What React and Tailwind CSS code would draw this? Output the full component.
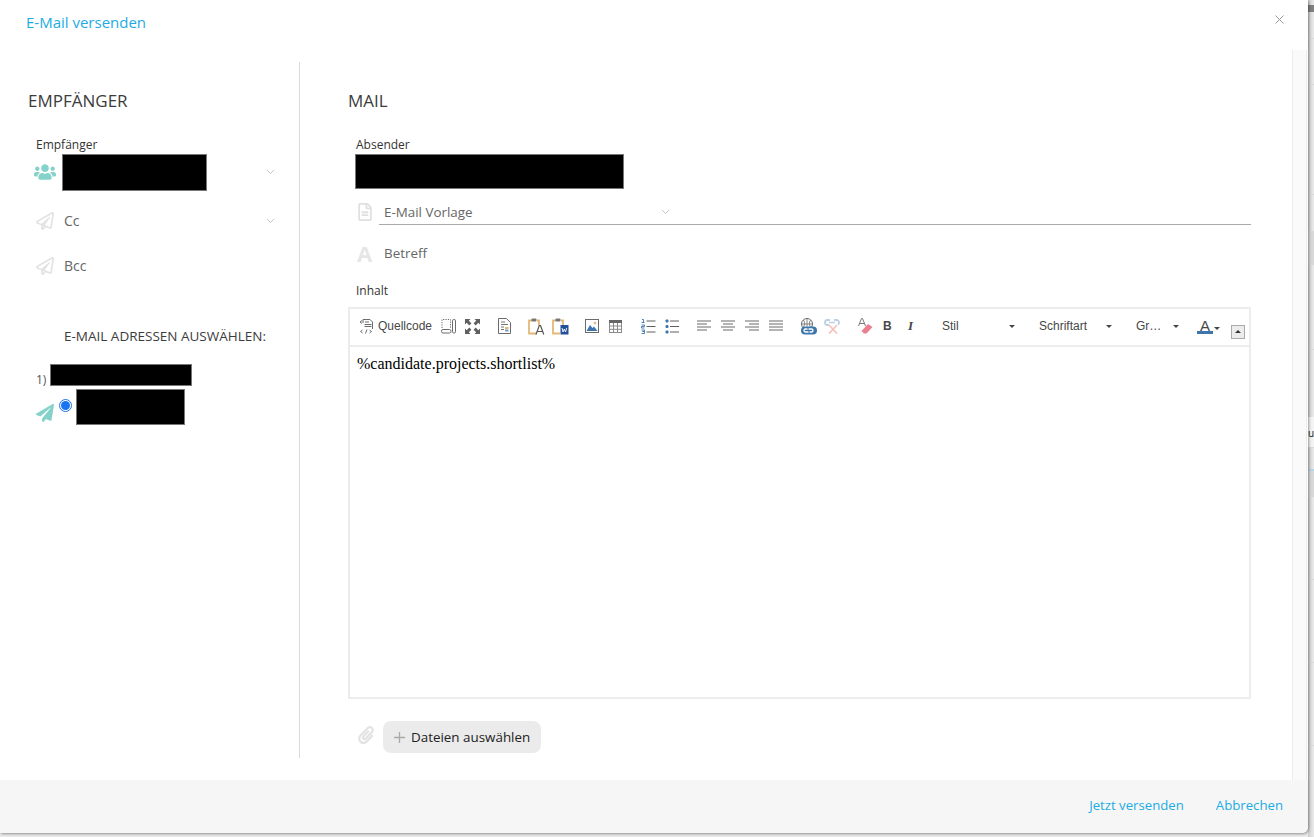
import React from "react";
import { FaRegPaperPlane, FaPaperPlane, FaUsers, FaRegFileAlt, FaPaperclip } from "react-icons/fa";

const Chevron = ({ className = "" }) => (
  <svg width="9" height="6" viewBox="0 0 9 6" className={className} fill="none" stroke="#c4c4c4" strokeWidth="1"><path d="M1 1l3.5 3.5L8 1" /></svg>
);

const Source = () => (
  <svg width="16" height="16" viewBox="0 0 16 16" fill="none" stroke="#6b6b6b" strokeWidth="1">
    <path d="M4 5V1.500h7L13.500 4v7M3 2.500L1 4l2 1.500M6 4h4M5.500 6.500h7M5.500 8.500h7M3.500 12l-2 1.500 2 1.500M8 11.500l-1.500 4M10.500 12l2 1.500-2 1.500" />
  </svg>
);
const Preview = () => (
  <svg width="15" height="16" viewBox="0 0 15 16" fill="none" stroke="#6b6b6b" strokeWidth="1">
    <path d="M1 10V1.500h8.500V10" strokeDasharray="1.200 1.200" /><rect x=".5" y="11.500" width="9.500" height="3.500" rx="1.500" /><rect x="11.500" y="1.500" width="3" height="13.500" rx="1.300" />
  </svg>
);
const Maximize = () => (
  <svg width="15" height="15" viewBox="0 0 15 15" fill="#5f5f5f">
    <path d="M0 0h5.500L3.800 1.700l2.600 2.600-2.100 2.100-2.600-2.600L0 5.500zM15 0v5.500l-1.700-1.700-2.600 2.600-2.100-2.100 2.600-2.600L9.500 0zM0 15V9.500l1.700 1.700 2.600-2.600 2.100 2.100-2.600 2.600L5.500 15zM15 15H9.500l1.700-1.700-2.600-2.600 2.100-2.100 2.600 2.600L15 9.500z" />
  </svg>
);
const DocTpl = () => (
  <svg width="13" height="16" viewBox="0 0 13 16" fill="none">
    <path d="M.5.5h8l4 4v11H.5z" stroke="#6b6b6b" fill="#fff" />
    <path d="M3 4h4M3 6.500h7M3 9h3M3 11.500h3" stroke="#777" />
    <rect x="7" y="9" width="3.500" height="2" fill="#e3b877" /><rect x="7" y="11.500" width="3.500" height="2" fill="#6f9fcb" />
  </svg>
);
const Paste = ({ word }) => (
  <svg width="17" height="17" viewBox="0 0 17 17" fill="none">
    <path d="M4 2.500H1v13h7" stroke="#e3b877" strokeWidth="1.800" />
    <path d="M9 2.500h2v5" stroke="#e3b877" strokeWidth="1.800" />
    <rect x="3.500" y=".5" width="5" height="3" rx="1" fill="#777" />
    {word ? (
      <g><rect x="8.500" y="7" width="8" height="9.500" fill="#24509a" /><path d="M10 10l1 4 1.300-3 1.300 3 1-4" stroke="#fff" strokeWidth=".9" /></g>
    ) : (
      <path d="M8 16.500l3.300-9h1.200l3.300 9M9.300 13.500h5.200" stroke="#555" strokeWidth="1.200" />
    )}
  </svg>
);
const ImageIcon = () => (
  <svg width="14" height="14" viewBox="0 0 14 14" fill="none">
    <rect x=".5" y=".5" width="13" height="13" stroke="#6b6b6b" fill="#fff" />
    <circle cx="10" cy="4" r="1.300" fill="#e3b877" />
    <path d="M1.500 12L5 6l2.500 3 1.500-1.500 3.500 4.500z" fill="#3d76ad" />
  </svg>
);
const Table = () => (
  <svg width="13" height="13" viewBox="0 0 13 13" fill="none" stroke="#8a8a8a" strokeWidth="1">
    <rect x=".5" y=".5" width="12" height="12" /><rect x="0" y="0" width="13" height="3" fill="#666" stroke="none" />
    <path d="M0 6h13M0 9.300h13M4.500 3v10M8.500 3v10" />
  </svg>
);
const NumList = () => (
  <svg width="15" height="15" viewBox="0 0 15 15">
    <path d="M5.500 2h9M5.500 7.500h9M5.500 13h9" stroke="#5f5f5f" />
    <path d="M1 .5h1.500v3M.5 3.500h3M.5 6h3v1.500h-3V9h3M.5 11h3v1.500h-2 2V14.500h-3" stroke="#3d76ad" fill="none" strokeWidth=".9" />
  </svg>
);
const BulList = () => (
  <svg width="14" height="15" viewBox="0 0 14 15">
    <path d="M5 2h9M5 7.500h9M5 13h9" stroke="#5f5f5f" />
    <rect x="0.500" y="0.500" width="3" height="3" rx="1" fill="#3d76ad" /><rect x="0.500" y="6" width="3" height="3" rx="1" fill="#3d76ad" /><rect x="0.500" y="11.500" width="3" height="3" rx="1" fill="#3d76ad" />
  </svg>
);
const Align = ({ d }) => (
  <svg width="14" height="12" viewBox="0 0 14 12" stroke="#6b6b6b" strokeWidth="1" fill="none"><path d={d} /></svg>
);
const LinkIcon = () => (
  <svg width="17" height="17" viewBox="0 0 17 17" fill="none">
    <circle cx="7" cy="6" r="5.500" stroke="#6b6b6b" />
    <path d="M1.500 6h11M7 .5v8M3.500 2C5 4.500 5 6.500 3.500 9M10.500 2C9 4.500 9 6.500 10.500 9" stroke="#6b6b6b" strokeWidth=".8" />
    <rect x="1" y="8.500" width="16" height="8" rx="4" fill="#3d76ad" />
    <path d="M7.500 11H5.500a1.500 1.500 0 000 3h3M9.500 14h2a1.500 1.500 0 000-3h-3" stroke="#fff" strokeWidth="1.300" />
  </svg>
);
const Unlink = () => (
  <svg width="16" height="16" viewBox="0 0 16 16" fill="none">
    <path d="M6 2H3.500a2.500 2.500 0 000 5H5M10 2h2.500a2.500 2.500 0 011.500 4.500" stroke="#bcd0e4" strokeWidth="1.800" />
    <path d="M5 4.500h6" stroke="#bcd0e4" strokeWidth="1.500" />
    <path d="M5 7l8 8.500M13 7l-8 8.500" stroke="#f3c4bd" strokeWidth="1.800" />
  </svg>
);
const Eraser = () => (
  <svg width="15" height="16" viewBox="0 0 15 16" fill="none">
    <path d="M.5 8l3-7.500h1L7.500 8M1.800 5.500h4.400" stroke="#6b6b6b" strokeWidth=".9" />
    <path d="M3.500 13L10 6l4.500 3-6 6.500H6z" fill="#ea7f8e" />
  </svg>
);
const Caret = () => <span className="w-0 h-0 border-x-[3px] border-x-transparent border-t-[3px] border-t-[#444] inline-block" />;

const Label = ({ children, className = "" }) => (
  <div className={`text-[12px] leading-[16px] text-[#333] ${className}`}>{children}</div>
);
const Redact = ({ className }) => <div className={`bg-black border border-[#777] ${className}`} />;

export default function App() {
  return (
    <div className="w-[1314px] h-[837px] overflow-hidden bg-[#ececec] flex font-['Open_Sans',sans-serif]">
      <div className="w-[1308px] h-[833px] bg-white flex flex-col rounded-br-[6px] shadow-[1px_1px_3px_rgba(0,0,0,0.4)] relative z-10">
        <div className="h-[50px] shrink-0 flex items-start justify-between pl-[26px] pr-[24px] pt-[13px]">
          <div className="text-[15px] leading-[20px] -mt-[1px] text-[#1cace3]">E-Mail versenden</div>
          <svg width="9" height="9" viewBox="0 0 9 9" className="mt-[2px]" stroke="#9a9a9a" strokeWidth="1"><path d="M.5.500l8 8M8.500.500l-8 8" /></svg>
        </div>

        <div className="flex-1 flex min-h-0">
          <div className="w-[300px] h-[696px] mt-[12px] border-r border-[#d9d9d9] shrink-0 flex flex-col">
            <div className="pl-[28px] pt-[28px] text-[17px] leading-[22px] text-[#3c3c3c]">EMPFÄNGER</div>
            <Label className="pl-[36px] mt-[25px]">Empfänger</Label>
            <div className="flex items-center h-[36px] pl-[34px] pr-[24px] mt-[1px]">
              <FaUsers size={22} color="#84d2c9" className="shrink-0" />
              <Redact className="w-[145px] h-[37px] ml-[6px]" />
              <Chevron className="ml-auto" />
            </div>
            <div className="flex items-center h-[18px] pl-[36px] pr-[24px] mt-[22px]">
              <FaRegPaperPlane size={18} color="#e3e3e3" />
              <span className="ml-[10px] -mt-[2px] text-[14px] text-[#666]">Cc</span>
              <Chevron className="ml-auto" />
            </div>
            <div className="flex items-center h-[18px] pl-[36px] pr-[24px] mt-[27px]">
              <FaRegPaperPlane size={18} color="#e3e3e3" />
              <span className="ml-[10px] -mt-[2px] text-[14px] text-[#666]">Bcc</span>
            </div>
            <div className="pl-[64px] mt-[52px] text-[13.500px] leading-[18px] text-[#3c3c3c] whitespace-nowrap">E-MAIL ADRESSEN AUSWÄHLEN:</div>
            <div className="flex items-end pl-[36px] mt-[19px] h-[22px]">
              <span className="text-[12px] leading-[13px] text-[#555]">1)</span>
              <Redact className="w-[142px] h-[22px] ml-[4px]" />
            </div>
            <div className="flex items-start pl-[36px] mt-[3px]">
              <FaPaperPlane size={18} color="#84d2c9" className="mt-[15px]" />
              <span className="w-[13px] h-[13px] rounded-full border border-[#1a73f0] bg-white flex items-center justify-center ml-[5px] mt-[10px]">
                <span className="w-[9px] h-[9px] rounded-full bg-[#1a73f0]" />
              </span>
              <Redact className="w-[109px] h-[36px] ml-[4px]" />
            </div>
          </div>

          <div className="flex-1 min-w-0 pl-[48px] pr-[41px] flex flex-col">
            <div className="pt-[40px] text-[17px] leading-[22px] text-[#3c3c3c]">MAIL</div>
            <Label className="pl-[8px] mt-[25px]">Absender</Label>
            <Redact className="w-[269px] h-[35px] ml-[7px] mt-[1px]" />
            <div className="flex items-center mt-[10px] h-[26px]">
              <FaRegFileAlt size={18} color="#e0e0e0" className="ml-[8px] shrink-0" />
              <div className="ml-[5px] flex-1 flex items-center h-[26px] border-b border-[#aaa] pl-[5px]">
                <span className="text-[13.400px] leading-[20px] mt-[1px] text-[#666]">E-Mail Vorlage</span>
                <Chevron className="ml-[188px]" />
              </div>
            </div>
            <div className="flex items-center mt-[16px] h-[24px]">
              <span className="ml-[9px] w-[16px] font-bold text-[22px] leading-[24px] text-[#e6e6e6]">A</span>
              <span className="ml-[11px] text-[13.400px] text-[#666]">Betreff</span>
            </div>
            <Label className="pl-[8px] mt-[18px]">Inhalt</Label>
            <div className="mt-[8px] h-[392px] border-2 border-[#ececec] flex flex-col font-['Liberation_Sans',sans-serif]">
              <div className="h-[38px] border-b-2 border-[#ececec] shrink-0 flex items-center pl-[9px] pb-[2px] text-[#474747] text-[12px]">
                <Source />
                <span className="ml-[3px] w-[54px]">Quellcode</span>
                <span className="ml-[9px]"><Preview /></span>
                <span className="ml-[9px]"><Maximize /></span>
                <span className="ml-[18px]"><DocTpl /></span>
                <span className="ml-[17px]"><Paste /></span>
                <span className="ml-[7px]"><Paste word /></span>
                <span className="ml-[16px]"><ImageIcon /></span>
                <span className="ml-[10px]"><Table /></span>
                <span className="ml-[19px]"><NumList /></span>
                <span className="ml-[9px]"><BulList /></span>
                <span className="ml-[18px]"><Align d="M0 1h14M0 4h10M0 7h14M0 10h10" /></span>
                <span className="ml-[10px]"><Align d="M0 1h14M2 4h10M0 7h14M2 10h10" /></span>
                <span className="ml-[10px]"><Align d="M0 1h14M4 4h10M0 7h14M4 10h10" /></span>
                <span className="ml-[10px]"><Align d="M0 1h14M0 4h14M0 7h14M0 10h14" /></span>
                <span className="ml-[17px]"><LinkIcon /></span>
                <span className="ml-[7px]"><Unlink /></span>
                <span className="ml-[18px]"><Eraser /></span>
                <span className="ml-[10px] font-bold text-[12px] w-[10px]">B</span>
                <span className="ml-[15px] italic font-['Liberation_Serif',serif] font-bold text-[13px] w-[8px]">I</span>
                <span className="ml-[26px] w-[67px]">Stil</span>
                <Caret />
                <span className="ml-[24px] w-[67px]">Schriftart</span>
                <Caret />
                <span className="ml-[24px] w-[37px]">Gr…</span>
                <Caret />
                <span className="ml-[18px] flex flex-col items-center leading-[13px] text-[15px] w-[16px]">
                  A<span className="w-[16px] h-[3px] bg-[#3d76ad] -mt-[1px]" />
                </span>
                <span className="ml-[1px]"><Caret /></span>
                <span className="ml-[11px] mt-[11px] w-[14px] h-[14px] border border-[#aaa] bg-[#ececec] flex items-center justify-center">
                  <span className="w-0 h-0 border-x-[3px] border-x-transparent border-b-[3px] border-b-[#333]" />
                </span>
              </div>
              <div className="flex-1 px-[7px] pt-[7px] text-[16px] leading-[20px] text-black font-['Liberation_Serif',serif]">%candidate.projects.shortlist%</div>
            </div>
            <div className="flex items-center mt-[22px] h-[32px]">
              <FaPaperclip size={18} color="#e3e3e3" className="ml-[9px] -mt-[4px]" />
              <button className="ml-[8px] w-[158px] h-[32px] rounded-[8px] bg-[#ebebeb] flex items-center pl-[10px] text-[13.400px] text-[#222]">
                <svg width="13" height="13" viewBox="0 0 13 13" stroke="#a9a9a9" strokeWidth="1.300"><path d="M6.500 1v11M1 6.500h11" /></svg>
                <span className="ml-[5px] whitespace-nowrap">Dateien auswählen</span>
              </button>
            </div>
          </div>

          <div className="w-[15px] shrink-0 mr-[1px] bg-[#fafafa] border-x border-[#ececec]" />
        </div>

        <div className="h-[53px] shrink-0 bg-[#f6f6f6] rounded-br-[6px] flex items-center justify-end gap-[32px] pr-[25px] pb-[2px] text-[13.200px] text-[#1cace3]">
          <span>Jetzt versenden</span>
          <span>Abbrechen</span>
        </div>
      </div>
      <div className="w-[6px] h-[837px] flex flex-col text-[10px] leading-[14px] text-[#222] bg-gradient-to-r from-[#d0d0d0] to-[#ebebeb]">
        <div className="h-[39px] border-b border-[#dadada] pt-[5px]"><div className="h-[7px] bg-[#808080]" /></div>
        <div className="h-[46px] border-b border-[#dadada]" />
        <div className="h-[110px] border-b border-[#dadada]" />
        <div className="h-[37px] border-b border-[#dadada]" />
        <div className="h-[33px] border-b border-[#dadada] bg-[#d8d8d8]" />
        <div className="h-[85px] border-b border-[#dadada]" />
        <div className="h-[67px]" />
        <div className="h-[31px] border-b border-[#dadada] bg-[#f4f4f4] pt-[9px]">u</div>
        <div className="h-[23px] border-b-2 border-[#b5d6e6]" />
        <div className="h-[26px] bg-[#d8d8d8]" />
        <div className="h-[83px] border-b border-[#dadada]" />
        <div className="h-[83px] border-b border-[#dadada]" />
        <div className="h-[83px] border-b border-[#dadada]" />
      </div>
    </div>
  );
}
